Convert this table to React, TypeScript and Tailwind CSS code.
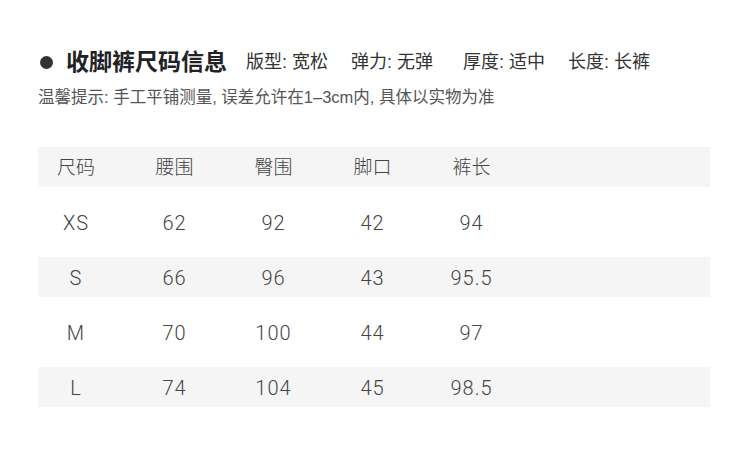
const rows = [
  ['XS', '62', '92', '42', '94'],
  ['S', '66', '96', '43', '95.5'],
  ['M', '70', '100', '44', '97'],
  ['L', '74', '104', '45', '98.5'],
];

const header = ['尺码', '腰围', '臀围', '脚口', '裤长'];

function Row({ cells, gray, head }: { cells: string[]; gray: boolean; head?: boolean }) {
  return (
    <div
      className={`flex h-[40px] items-center pt-[3px] ${gray ? 'bg-[#f5f5f5]' : ''} ${
        head ? 'text-[19px]' : 'text-[20px] tracking-[1px]'
      }`}
    >
      <div className="w-[76px] text-center">{cells[0]}</div>
      <div className="w-[11px]" />
      {cells.slice(1).map((c, i) => (
        <div key={i} className="w-[99px] text-center">
          {c}
        </div>
      ))}
    </div>
  );
}

export default function App() {
  return (
    <div
      className="w-[750px] h-[457px] bg-white text-[#333] pt-[45px]"
      style={{ fontFamily: '"Liberation Sans", "Noto Sans CJK SC", sans-serif' }}
    >
      <div className="flex items-center pl-[40px] h-[34px]">
        <span className="w-[13px] h-[13px] rounded-full bg-[#333]" />
        <span className="ml-[13px] text-[23px] font-bold text-[#222]">收脚裤尺码信息</span>
        <span className="ml-[19px] text-[18px]">版型: 宽松</span>
        <span className="ml-[23px] text-[18px]">弹力: 无弹</span>
        <span className="ml-[30px] text-[18px]">厚度: 适中</span>
        <span className="ml-[23px] text-[18px]">长度: 长裤</span>
      </div>
      <div className="pl-[38px] mt-[6px] text-[16.5px] text-[#555]">
        温馨提示: 手工平铺测量, 误差允许在1–3cm内, 具体以实物为准
      </div>
      <div
        className="ml-[38px] w-[672px] mt-[37px] flex flex-col gap-[15px] font-light text-[#444]"
        style={{ fontFamily: 'Roboto, "Noto Sans CJK SC", sans-serif' }}
      >
        <Row cells={header} gray head />
        {rows.map((r, i) => (
          <Row key={i} cells={r} gray={i % 2 === 1} />
        ))}
      </div>
    </div>
  );
}
